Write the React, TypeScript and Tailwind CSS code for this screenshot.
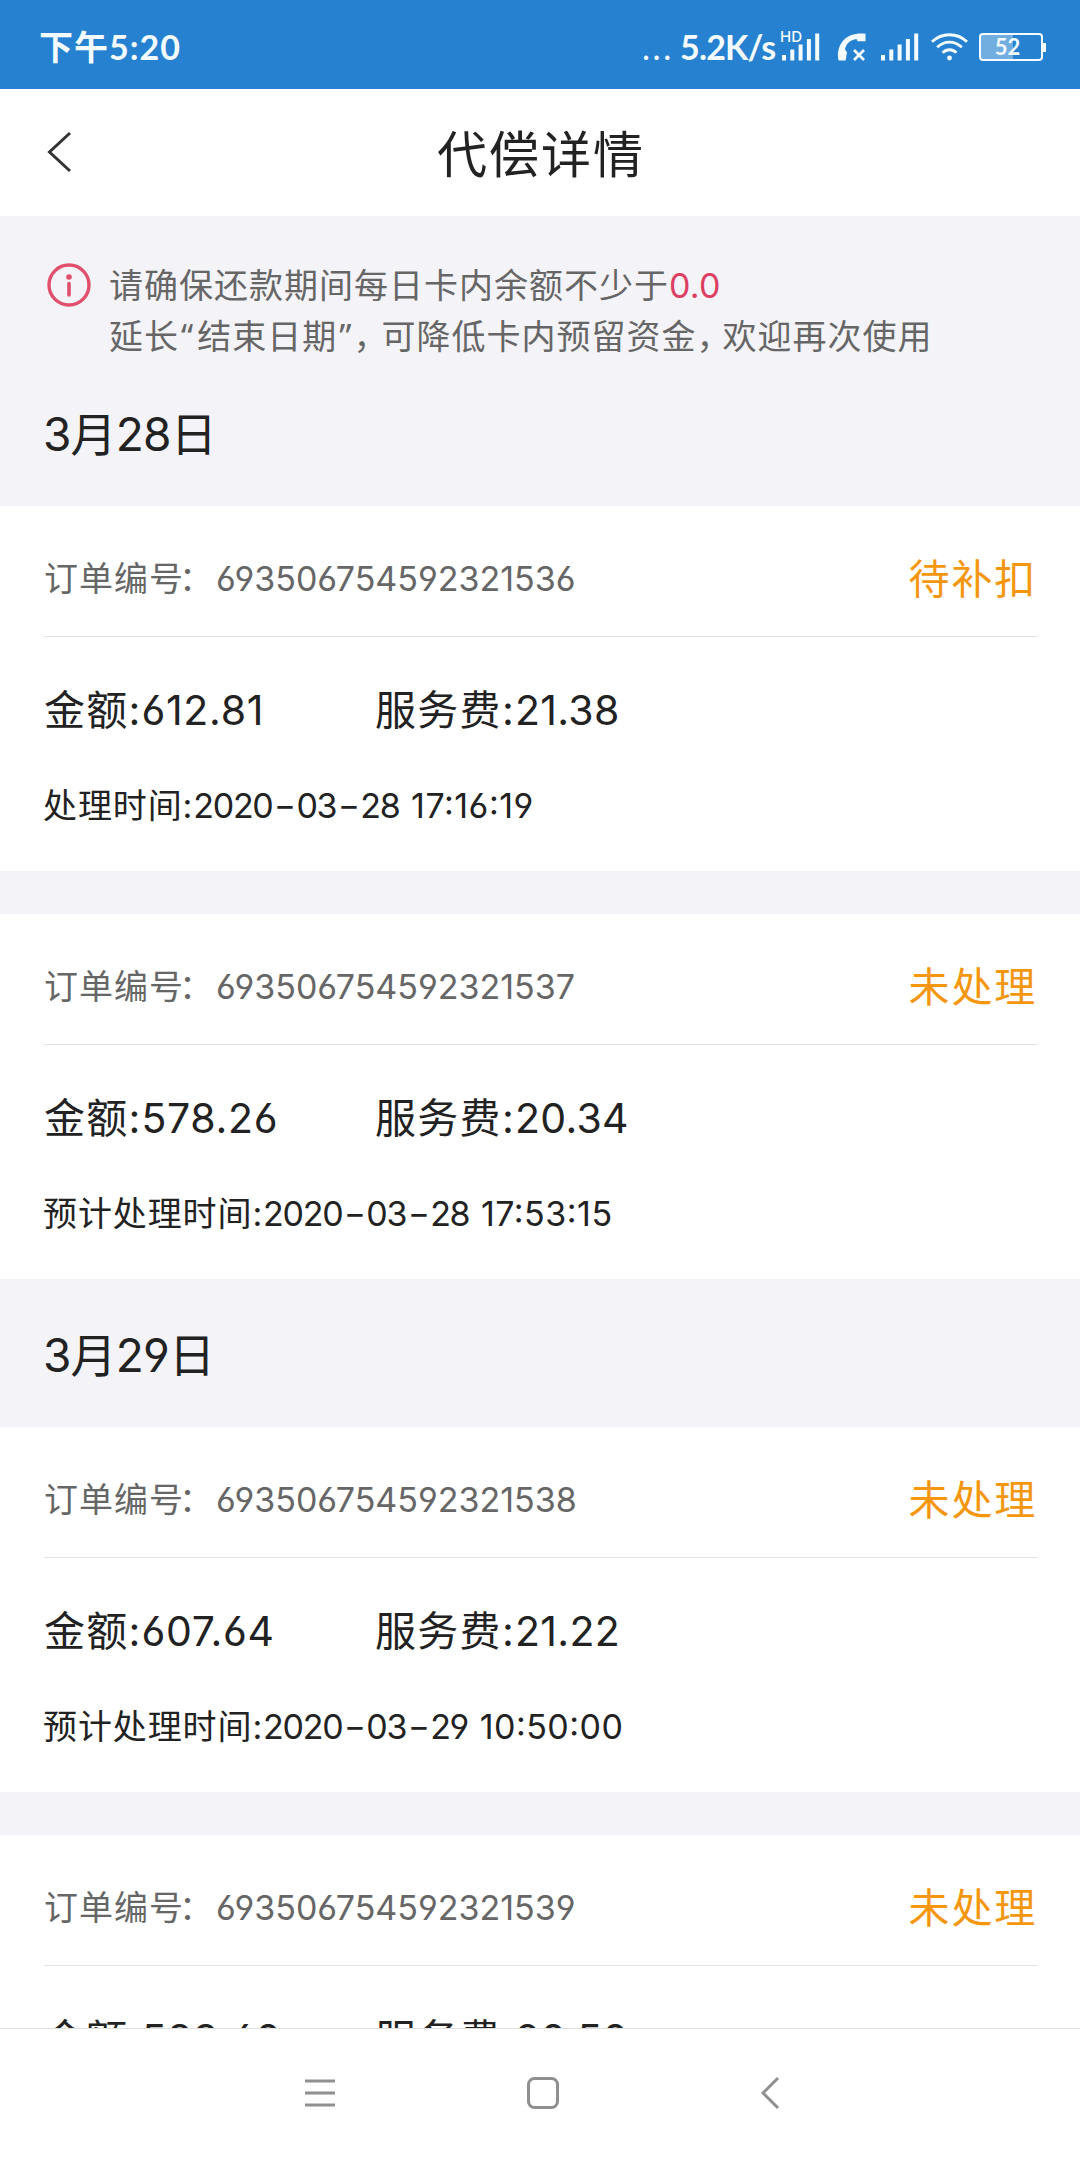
import { Fragment, type ReactNode } from 'react'

type Order = {
  no: string
  status: string
  amount: string
  fee: string
  timeLabel: string
  date: string
  time: string
}

const march28: Order[] = [
  {
    no: '693506754592321536',
    status: '待补扣',
    amount: '612.81',
    fee: '21.38',
    timeLabel: '处理时间:',
    date: '2020-03-28',
    time: '17:16:19',
  },
  {
    no: '693506754592321537',
    status: '未处理',
    amount: '578.26',
    fee: '20.34',
    timeLabel: '预计处理时间:',
    date: '2020-03-28',
    time: '17:53:15',
  },
]

const march29: Order[] = [
  {
    no: '693506754592321538',
    status: '未处理',
    amount: '607.64',
    fee: '21.22',
    timeLabel: '预计处理时间:',
    date: '2020-03-29',
    time: '10:50:00',
  },
  {
    no: '693506754592321539',
    status: '未处理',
    amount: '583.60',
    fee: '20.50',
    timeLabel: '预计处理时间:',
    date: '2020-03-29',
    time: '11:20:00',
  },
]

function SignalBars() {
  return (
    <svg width="38" height="28" viewBox="0 0 38 28" fill="currentColor">
      <rect x="0" y="22" width="4" height="5.5" />
      <rect x="8.3" y="16.5" width="4" height="11" />
      <rect x="16.6" y="11.5" width="4" height="16" />
      <rect x="24.9" y="6" width="4" height="21.5" />
      <rect x="33.2" y="0.5" width="4" height="27" />
    </svg>
  )
}

function StatusBar() {
  return (
    <div className="flex h-[89px] shrink-0 items-center justify-between bg-[#2682d0] pt-[5px] pr-[34px] pl-[39px] text-[#f4fbff]">
      <span className="font-[Lato,'Noto_Sans_CJK_SC',sans-serif] text-[34px] leading-[40px] font-bold tracking-[1px]">下午5:20</span>
      <div className="flex items-center">
        <span className="w-[38px] font-[Lato] text-[34px] leading-[40px] tracking-[2.6px]">...</span>
        <span className="w-[102px] font-[Lato] text-[34px] leading-[40px] font-bold tracking-[-0.8px]">5.2K/s</span>
        <div className="relative mr-[17px]">
          <SignalBars />
          <span className="absolute -top-[3px] -left-[2px] text-[15px] leading-[13px] font-medium">HD</span>
        </div>
        <svg className="mr-[15px]" width="29" height="28" viewBox="0 0 29 28" fill="currentColor">
          <path d="M28.5 0.8V8.2H20.5L19.6 6C13 7 8.8 11 8 16.5L10 19.2L8.6 27.5H1.6C0 22 1 13 6.5 7.2C12 1.5 20 -0.3 28.5 0.8Z" />
          <path d="M17 17L27 27M27 17L17 27" stroke="currentColor" strokeWidth="2.8" fill="none" />
        </svg>
        <SignalBars />
        <svg className="ml-[12px]" width="37" height="28" viewBox="0 0 37 28" fill="none" stroke="currentColor" strokeWidth="2.9">
          <path d="M1 8.8C10.8 -0.6 26.2 -0.6 36 8.8" />
          <path d="M6.2 14.3C13.2 7.4 23.8 7.4 30.8 14.3" />
          <path d="M11.6 19.7C15.6 15.8 21.4 15.8 25.4 19.7" />
          <circle cx="18.5" cy="25" r="2.4" fill="currentColor" stroke="none" />
        </svg>
        <div className="ml-[11px] flex h-[28px] w-[64px] items-center justify-center rounded-[4px] border-[2.5px] border-current bg-linear-to-r from-white/35 from-54% to-transparent to-54% font-[Lato] text-[22px] leading-[22px] font-bold">
          <span className="-ml-[7px]">52</span>
        </div>
        <div className="h-[9px] w-[3px] bg-current" />
      </div>
    </div>
  )
}

function DateTitle({ children }: { children: ReactNode }) {
  return <h2 className="-ml-[1px] text-[46px] leading-[60px] tracking-[-0.8px]">{children}</h2>
}

// wide hyphens between the date parts
function DateText({ value }: { value: string }) {
  return (
    <span className="tracking-[-1.3px]">
      {value.split('-').map((part, i) => (
        <Fragment key={i}>
          {i > 0 && <span className="inline-block w-[24px] scale-x-140 text-center">-</span>}
          {part}
        </Fragment>
      ))}
    </span>
  )
}

function OrderCard({ order }: { order: Order }) {
  return (
    <article className="h-[365px] shrink-0 bg-white px-[44px]">
      <div className="-mr-[1px] flex h-[131px] items-center justify-between border-b border-[#e2e2e2] pt-[16px]">
        <div className="flex text-[34px] leading-[50px] whitespace-nowrap text-[#666]">
          <span className="w-[172px] tracking-[1px]">
            订单编<span className="tracking-[-4px]">号</span>：
          </span>
          <span className="tracking-[0px]">{order.no}</span>
        </div>
        <span className="text-[41px] leading-[50px] tracking-[1.8px] text-[#f5960f]">{order.status}</span>
      </div>
      <div className="mt-[43px] flex text-[41px] leading-[60px]">
        <p className="w-[331px] tracking-[0.7px]">
          <span className="tracking-[1.2px]">金额:</span>
          {order.amount}
        </p>
        <p className="tracking-[0.3px]">
          <span className="tracking-[1.3px]">服务费:</span>
          {order.fee}
        </p>
      </div>
      <p className="mt-[41px] -ml-[1px] text-[34px] leading-[50px]">
        <span className="tracking-[0.9px]">{order.timeLabel}</span>
        <DateText value={order.date} /> <span className="ml-[2px] tracking-[0.5px]">{order.time}</span>
      </p>
    </article>
  )
}

export default function App() {
  return (
    <div className="flex h-[2158px] w-[1080px] flex-col overflow-hidden bg-[#f4f3f8] font-[Inter,'Noto_Sans_CJK_SC',sans-serif] text-[#222] [font-feature-settings:'calt','cv03','cv04']">
      <StatusBar />
      <header className="grid h-[127px] shrink-0 grid-cols-[1fr_auto_1fr] items-center bg-white">
        <svg className="mb-[2px] ml-[46px]" width="27" height="42" viewBox="0 0 27 42" fill="none" stroke="#333" strokeWidth="3">
          <path d="M24 2L3.5 21L24 40" />
        </svg>
        <h1 className="pt-[5px] pl-[2px] text-[50px] leading-[60px] tracking-[2px]">代偿详情</h1>
      </header>

      <main className="flex min-h-0 flex-1 flex-col overflow-hidden">
        <section className="h-[290px] shrink-0 px-[44px] pt-[45px]">
          <div className="flex text-[34px] leading-[50px] text-[#666]">
            <svg className="mt-[2px] mr-[18px] ml-[3px] shrink-0" width="44" height="44" viewBox="0 0 44 44" fill="none" stroke="#e0506c" strokeWidth="3.4">
              <circle cx="22" cy="22" r="20" />
              <circle cx="22" cy="14" r="2.8" fill="#e0506c" stroke="none" />
              <path d="M22 20.5V32" strokeWidth="3.6" strokeLinecap="round" />
            </svg>
            <div className="tracking-[1px]">
              <p>
                请确保还款期间每日卡内余额不少于<span className="tracking-[0.2px] text-[#dc3f61]">0.0</span>
              </p>
              <p>
                延长<span className="ml-[2px] font-['Noto_Sans'] tracking-[4px]">“</span>结束日期
                <span className="ml-[2px] font-['Noto_Sans'] tracking-[2px]">”</span>
                <span className="tracking-[-6px]">，</span>可降低卡内预留资金<span className="tracking-[-8px]">，</span>欢迎再次使用
              </p>
            </div>
          </div>
          <div className="mt-[42px]">
            <DateTitle>3月28日</DateTitle>
          </div>
        </section>
        <div className="flex shrink-0 flex-col gap-[43px]">
          {march28.map((order) => (
            <OrderCard key={order.no} order={order} />
          ))}
        </div>
        <section className="flex h-[148px] shrink-0 items-center px-[44px] pt-[3px]">
          <DateTitle>3月29日</DateTitle>
        </section>
        <div className="flex shrink-0 flex-col gap-[43px]">
          {march29.map((order) => (
            <OrderCard key={order.no} order={order} />
          ))}
        </div>
      </main>

      <nav className="flex h-[130px] shrink-0 items-center border-t border-[#e0e0e0] bg-white pb-[2px] pl-[304px] text-[#8f8f8f]">
        <svg width="32" height="32" viewBox="0 0 32 32" stroke="currentColor" strokeWidth="2.8">
          <path d="M1 4H31M1 16H31M1 28H31" />
        </svg>
        <svg className="ml-[190px]" width="34" height="34" viewBox="0 0 34 34" fill="none" stroke="currentColor" strokeWidth="3">
          <rect x="2.5" y="2.5" width="29" height="29" rx="6" />
        </svg>
        <svg className="ml-[199px]" width="22" height="34" viewBox="0 0 22 34" fill="none" stroke="currentColor" strokeWidth="3">
          <path d="M19 2L4 17L19 32" />
        </svg>
      </nav>
    </div>
  )
}
